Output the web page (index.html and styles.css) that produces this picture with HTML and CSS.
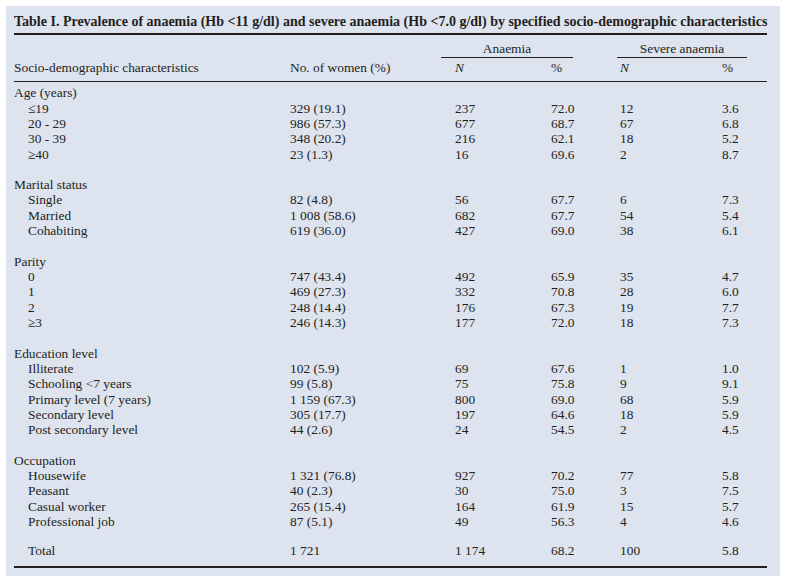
FILE: index.html
```html
<!DOCTYPE html>
<html lang="en">
<head>
<meta charset="utf-8">
<title>Table I</title>
<link rel="stylesheet" href="styles.css">
</head>
<body>
<div class="panel">
  <h1 class="title">Table I. Prevalence of anaemia (Hb &lt;11 g/dl) and severe anaemia (Hb &lt;7.0 g/dl) by specified socio-demographic characteristics</h1>
  <table class="data">
    <colgroup>
      <col class="c1"><col class="c2"><col class="c3"><col class="c4"><col class="c5"><col class="c6">
    </colgroup>
    <thead>
      <tr class="hrow1">
        <th></th><th></th>
        <th colspan="2"><div class="group g-anaemia">Anaemia</div></th>
        <th colspan="2"><div class="group g-severe">Severe anaemia</div></th>
      </tr>
      <tr class="hrow2">
        <th>Socio-demographic characteristics</th>
        <th>No. of women (%)</th>
        <th><i>N</i></th><th>%</th>
        <th><i>N</i></th><th>%</th>
      </tr>
    </thead>
    <tbody>
      <tr class="first"><td>Age (years)</td><td></td><td></td><td></td><td></td><td></td></tr>
      <tr><td class="sub">≤19</td><td>329 (19.1)</td><td>237</td><td>72.0</td><td>12</td><td>3.6</td></tr>
      <tr><td class="sub">20 - 29</td><td>986 (57.3)</td><td>677</td><td>68.7</td><td>67</td><td>6.8</td></tr>
      <tr><td class="sub">30 - 39</td><td>348 (20.2)</td><td>216</td><td>62.1</td><td>18</td><td>5.2</td></tr>
      <tr><td class="sub">≥40</td><td>23 (1.3)</td><td>16</td><td>69.6</td><td>2</td><td>8.7</td></tr>
      <tr class="blank"><td colspan="6"></td></tr>
      <tr><td>Marital status</td><td></td><td></td><td></td><td></td><td></td></tr>
      <tr><td class="sub">Single</td><td>82 (4.8)</td><td>56</td><td>67.7</td><td>6</td><td>7.3</td></tr>
      <tr><td class="sub">Married</td><td>1 008 (58.6)</td><td>682</td><td>67.7</td><td>54</td><td>5.4</td></tr>
      <tr><td class="sub">Cohabiting</td><td>619 (36.0)</td><td>427</td><td>69.0</td><td>38</td><td>6.1</td></tr>
      <tr class="blank"><td colspan="6"></td></tr>
      <tr><td>Parity</td><td></td><td></td><td></td><td></td><td></td></tr>
      <tr><td class="sub">0</td><td>747 (43.4)</td><td>492</td><td>65.9</td><td>35</td><td>4.7</td></tr>
      <tr><td class="sub">1</td><td>469 (27.3)</td><td>332</td><td>70.8</td><td>28</td><td>6.0</td></tr>
      <tr><td class="sub">2</td><td>248 (14.4)</td><td>176</td><td>67.3</td><td>19</td><td>7.7</td></tr>
      <tr><td class="sub">≥3</td><td>246 (14.3)</td><td>177</td><td>72.0</td><td>18</td><td>7.3</td></tr>
      <tr class="blank"><td colspan="6"></td></tr>
      <tr><td>Education level</td><td></td><td></td><td></td><td></td><td></td></tr>
      <tr><td class="sub">Illiterate</td><td>102 (5.9)</td><td>69</td><td>67.6</td><td>1</td><td>1.0</td></tr>
      <tr><td class="sub">Schooling &lt;7 years</td><td>99 (5.8)</td><td>75</td><td>75.8</td><td>9</td><td>9.1</td></tr>
      <tr><td class="sub">Primary level (7 years)</td><td>1 159 (67.3)</td><td>800</td><td>69.0</td><td>68</td><td>5.9</td></tr>
      <tr><td class="sub">Secondary level</td><td>305 (17.7)</td><td>197</td><td>64.6</td><td>18</td><td>5.9</td></tr>
      <tr><td class="sub">Post secondary level</td><td>44 (2.6)</td><td>24</td><td>54.5</td><td>2</td><td>4.5</td></tr>
      <tr class="blank"><td colspan="6"></td></tr>
      <tr><td>Occupation</td><td></td><td></td><td></td><td></td><td></td></tr>
      <tr><td class="sub">Housewife</td><td>1 321 (76.8)</td><td>927</td><td>70.2</td><td>77</td><td>5.8</td></tr>
      <tr><td class="sub">Peasant</td><td>40 (2.3)</td><td>30</td><td>75.0</td><td>3</td><td>7.5</td></tr>
      <tr><td class="sub">Casual worker</td><td>265 (15.4)</td><td>164</td><td>61.9</td><td>15</td><td>5.7</td></tr>
      <tr><td class="sub">Professional job</td><td>87 (5.1)</td><td>49</td><td>56.3</td><td>4</td><td>4.6</td></tr>
      <tr class="blank short"><td colspan="6"></td></tr>
      <tr class="total"><td class="sub">Total</td><td>1 721</td><td>1 174</td><td>68.2</td><td>100</td><td>5.8</td></tr>
    </tbody>
  </table>
</div>
</body>
</html>
```
FILE: styles.css
```css
html, body {
  margin: 0;
  padding: 0;
  background: #ffffff;
}

body {
  font-family: "Liberation Serif", "Times New Roman", serif;
  color: #231f20;
}

.panel {
  width: 774px;
  height: 570px;
  margin: 6px 0 0 6px;
  padding: 7px 13px 0 8px;
  box-sizing: border-box;
  background: #dde3ef;
}

.title {
  margin: 0;
  font-size: 14px;
  font-weight: bold;
  line-height: 18px;
  padding-bottom: 2px;
  border-bottom: 2px solid #231f20;
  white-space: nowrap;
}

.data {
  width: 753px;
  table-layout: fixed;
  border-collapse: collapse;
  font-size: 13.4px;
}

.c1 { width: 276px; }
.c2 { width: 165px; }
.c3 { width: 96px; }
.c4 { width: 69px; }
.c5 { width: 102px; }
.c6 { width: 45px; }

.data th,
.data td {
  padding: 0;
  text-align: left;
  font-weight: normal;
  white-space: nowrap;
  vertical-align: middle;
}

.hrow1 th {
  padding-top: 6px;
  line-height: 15px;
}

.group {
  text-align: center;
  padding-bottom: 1px;
  border-bottom: 1px solid #231f20;
}

.g-anaemia {
  margin: 0 47px 0 -14px;
}

.g-severe {
  margin: 0 20px 0 -3px;
}

.hrow2 th {
  padding-top: 2px;
  padding-bottom: 6px;
  line-height: 15px;
  border-bottom: 1px solid #231f20;
}

.data tbody td {
  height: 15.32px;
  line-height: 15.32px;
}

.data tbody tr.first td {
  padding-top: 3.3px;
}

.data td.sub {
  padding-left: 14px;
}

.data tr.blank td {
  height: 15.32px;
}

.data tr.blank.short td {
  height: 13.7px;
}

.data tr.total td {
  padding-bottom: 8px;
  border-bottom: 2px solid #231f20;
}
```
